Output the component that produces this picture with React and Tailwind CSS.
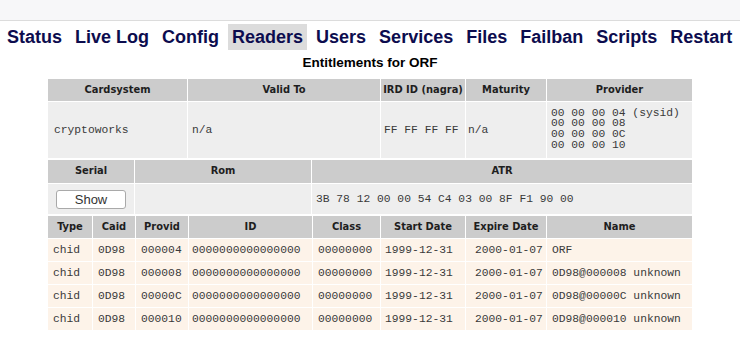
import React from 'react';

const navItems = ['Status', 'Live Log', 'Config', 'Readers', 'Users', 'Services', 'Files', 'Failban', 'Scripts', 'Restart'];

const entitlements = [
    { provid: '000004', name: 'ORF' },
    { provid: '000008', name: '0D98@000008 unknown' },
    { provid: '00000C', name: '0D98@00000C unknown' },
    { provid: '000010', name: '0D98@000010 unknown' },
];

const head = "bg-[#cccccc] flex items-center justify-center font-bold text-[#1e1e1e] text-[11px] [font-family:'DejaVu_Sans_Condensed','DejaVu_Sans',sans-serif]";
const mono = "[font-family:'Liberation_Mono','Courier_New',monospace] text-[11.3px] text-[#3a3a3a]";

export default function App() {
    return (
        <div className="min-h-screen bg-white [font-family:'Liberation_Sans',Arial,sans-serif]">
            <div className="h-[21px] bg-[#f7f7f9] border-b border-[#dcdcdc]" />

            <div className="flex items-center gap-[5px] pl-[3px] mt-[3px] h-[26px]">
                {navItems.map(item => (
                    <span
                        key={item}
                        className={`px-[4px] h-[26px] flex items-center text-[18px] font-bold text-[#0c0c4e] whitespace-nowrap ${item === 'Readers' ? 'bg-[#dcdcdc]' : ''}`}
                    >
                        {item}
                    </span>
                ))}
            </div>

            <div className="text-center font-bold text-[13.5px] text-black mt-[4px] leading-[17px]">Entitlements for ORF</div>

            <div className="w-[644px] mx-auto mt-[8px]">
                {/* reader info */}
                <div className="grid grid-cols-[139px_192px_84px_80px_145px] gap-px">
                    <div className={`${head} h-[22px]`}>Cardsystem</div>
                    <div className={`${head} h-[22px]`}>Valid To</div>
                    <div className={`${head} h-[22px]`}>IRD ID (nagra)</div>
                    <div className={`${head} h-[22px]`}>Maturity</div>
                    <div className={`${head} h-[22px]`}>Provider</div>

                    <div className={`${mono} bg-[#eeeeee] h-[56px] flex items-center pl-[6px]`}>cryptoworks</div>
                    <div className={`${mono} bg-[#eeeeee] flex items-center pl-[4px]`}>n/a</div>
                    <div className={`${mono} bg-[#eeeeee] flex items-center pl-[3px]`}>FF FF FF FF</div>
                    <div className={`${mono} bg-[#eeeeee] flex items-center pl-[2px]`}>n/a</div>
                    <div className={`${mono} bg-[#eeeeee] flex flex-col justify-center pl-[4px] pb-[2px] leading-[10.7px] whitespace-pre`}>
                        <span>00 00 00 04 (sysid)</span>
                        <span>00 00 00 08</span>
                        <span>00 00 00 0C</span>
                        <span>00 00 00 10</span>
                    </div>
                </div>

                {/* card info */}
                <div className="grid grid-cols-[86px_176px_380px] gap-px mt-[2px]">
                    <div className={`${head} h-[23px]`}>Serial</div>
                    <div className={`${head} h-[23px]`}>Rom</div>
                    <div className={`${head} h-[23px]`}>ATR</div>

                    <div className="bg-[#eeeeee] h-[30px] flex items-center justify-center">
                        <button className="w-[70px] h-[19px] bg-white border border-[#a9a9a9] rounded-[3px] text-[13px] text-[#333] leading-none">Show</button>
                    </div>
                    <div className="bg-[#eeeeee]" />
                    <div className={`${mono} bg-[#eeeeee] flex items-center pl-[4px]`}>3B 78 12 00 00 54 C4 03 00 8F F1 90 00</div>
                </div>

                {/* entitlements */}
                <div className="grid grid-cols-[44px_42px_52px_123px_67px_84px_80px_145px] gap-px mt-[2px]">
                    {['Type', 'Caid', 'Provid', 'ID', 'Class', 'Start Date', 'Expire Date', 'Name'].map(h => (
                        <div key={h} className={`${head} h-[22px]`}>{h}</div>
                    ))}
                    {entitlements.map(e => (
                        <React.Fragment key={e.provid}>
                            <div className={`${mono} bg-[#fdf3e9] h-[22px] flex items-center pl-[5px]`}>chid</div>
                            <div className={`${mono} bg-[#fdf3e9] flex items-center pl-[5px]`}>0D98</div>
                            <div className={`${mono} bg-[#fdf3e9] flex items-center pl-[5px]`}>{e.provid}</div>
                            <div className={`${mono} bg-[#fdf3e9] flex items-center pl-[3px]`}>0000000000000000</div>
                            <div className={`${mono} bg-[#fdf3e9] flex items-center pl-[5px]`}>00000000</div>
                            <div className={`${mono} bg-[#fdf3e9] flex items-center pl-[4px]`}>1999-12-31</div>
                            <div className={`${mono} bg-[#fdf3e9] flex items-center pl-[9px]`}>2000-01-07</div>
                            <div className={`${mono} bg-[#fdf3e9] flex items-center pl-[5px] whitespace-pre`}>{e.name}</div>
                        </React.Fragment>
                    ))}
                </div>
            </div>
        </div>
    );
}
